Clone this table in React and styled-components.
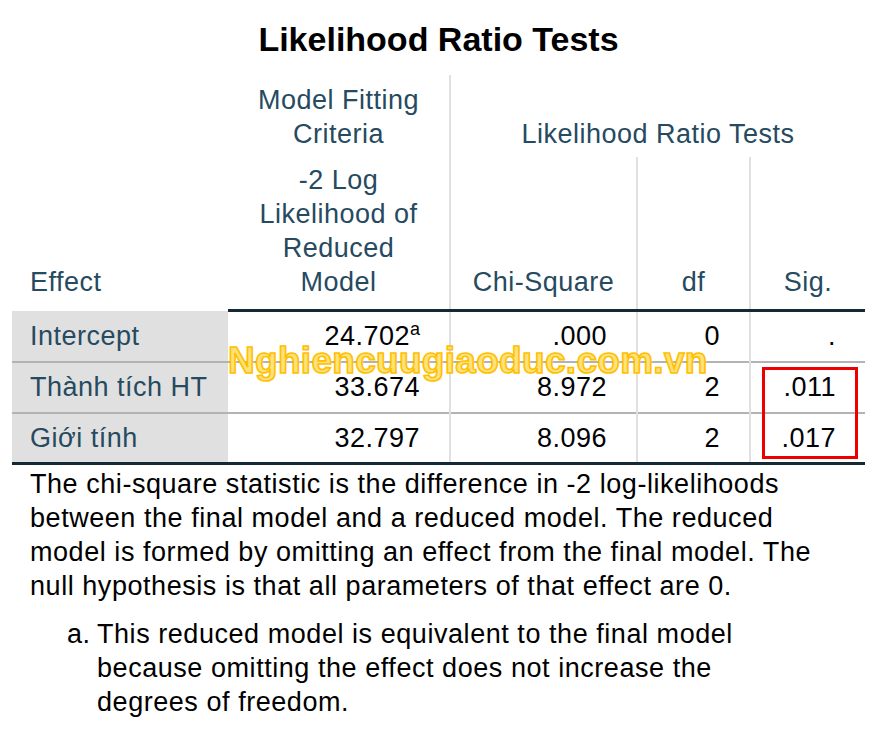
import React from "react";
import styled, { createGlobalStyle } from "styled-components";

const GlobalStyle = createGlobalStyle`
  html, body {
    margin: 0;
    padding: 0;
    background: #ffffff;
  }
  body {
    font-family: "Liberation Sans", Arial, sans-serif;
  }
`;

const header = "#264a60";
const ink = "#010205";

const columns = [216, 222, 187, 113, 115];

const rows = [
  { effect: "Intercept", ll: "24.702", note: "a", chi: ".000", df: "0", sig: "." },
  { effect: "Thành tích HT", ll: "33.674", chi: "8.972", df: "2", sig: ".011" },
  { effect: "Giới tính", ll: "32.797", chi: "8.096", df: "2", sig: ".017" },
];

function App() {
  return (
    <Page>
      <GlobalStyle />
      <Title>Likelihood Ratio Tests</Title>
      <TableWrap>
        <Table>
          <colgroup>
            {columns.map((w, i) => (
              <col key={i} style={{ width: w }} />
            ))}
          </colgroup>
          <thead>
            <tr>
              <HeadCell rowSpan={2} align="left" $pad="0 0 12px 18px">
                Effect
              </HeadCell>
              <HeadCell $line $pad="8px 6px 6px" $height={82}>
                Model Fitting
                <br />
                Criteria
              </HeadCell>
              <HeadCell colSpan={3} $pad="0 6px 6px">
                Likelihood Ratio Tests
              </HeadCell>
            </tr>
            <tr>
              <HeadCell $line $pad="6px 6px 10px">
                -2 Log
                <br />
                Likelihood of
                <br />
                Reduced
                <br />
                Model
              </HeadCell>
              <HeadCell $line $pad="0 4px 10px">Chi-Square</HeadCell>
              <HeadCell $line $pad="0 4px 10px">df</HeadCell>
              <HeadCell $pad="0 4px 10px">Sig.</HeadCell>
            </tr>
          </thead>
          <tbody>
            {rows.map((r, i) => (
              <DataRow key={r.effect} $last={i === rows.length - 1}>
                <Label>{r.effect}</Label>
                <Num $line>
                  {r.ll}
                  {r.note && <Sup>{r.note}</Sup>}
                </Num>
                <Num $line>{r.chi}</Num>
                <Num $line>{r.df}</Num>
                <Num>{r.sig}</Num>
              </DataRow>
            ))}
          </tbody>
        </Table>
        <Watermark>Nghiencuugiaoduc.com.vn</Watermark>
        <Highlight />
      </TableWrap>
      <Note>
        The chi-square statistic is the difference in -2 log-likelihoods
        between the final model and a reduced model. The reduced model is
        formed by omitting an effect from the final model. The null hypothesis
        is that all parameters of that effect are 0.
      </Note>
      <Footnote>
        <Mark>a.</Mark>
        <span>
          This reduced model is equivalent to the final model because omitting
          the effect does not increase the degrees of freedom.
        </span>
      </Footnote>
    </Page>
  );
}

export default App;

const Page = styled.div`
  width: 882px;
  height: 742px;
  padding: 21px 0 0 12px;
  box-sizing: border-box;
`;

const Title = styled.h1`
  width: 853px;
  margin: 0;
  font-size: 34px;
  line-height: 36px;
  font-weight: bold;
  text-align: center;
  color: #000;
`;

const TableWrap = styled.div`
  position: relative;
  width: 853px;
  margin-top: 18px;
`;

const Table = styled.table`
  width: 853px;
  border-collapse: collapse;
  table-layout: fixed;
  font-size: 27px;
  line-height: 34px;
  letter-spacing: 0.5px;

  thead tr:last-child th {
    border-bottom: 3px solid #152935;
  }
`;

const HeadCell = styled.th`
  font-weight: normal;
  color: ${header};
  text-align: ${(p) => p.align || "center"};
  vertical-align: bottom;
  padding: ${(p) => p.$pad || "0"};
  height: ${(p) => (p.$height ? `${p.$height}px` : "auto")};
  box-sizing: border-box;
  border-right: ${(p) => (p.$line ? "2px solid #e0e0e0" : "none")};
  white-space: nowrap;
`;

const DataRow = styled.tr`
  height: 51px;
  border-bottom: ${(p) => (p.$last ? "3px solid #152935" : "2px solid #b3b3b3")};
`;

const Label = styled.td`
  background: #e0e0e0;
  color: ${header};
  padding: 0 0 0 18px;
  white-space: nowrap;
`;

const Num = styled.td`
  color: ${ink};
  text-align: right;
  padding: 0 29px 0 0;
  border-right: ${(p) => (p.$line ? "2px solid #e0e0e0" : "none")};
  white-space: nowrap;
`;

const Sup = styled.sup`
  font-size: 18px;
  line-height: 0;
  letter-spacing: 0;
  vertical-align: 10px;
`;

const Watermark = styled.div`
  position: absolute;
  left: 216px;
  top: 266px;
  font-size: 37px;
  line-height: 40px;
  font-weight: bold;
  color: #ffe27a;
  -webkit-text-stroke: 1.6px #ffbf00;
  letter-spacing: 0.3px;
  pointer-events: none;
  white-space: nowrap;
`;

const Highlight = styled.div`
  position: absolute;
  left: 750px;
  top: 292px;
  width: 96px;
  height: 92px;
  box-sizing: border-box;
  border: 3px solid #ee0000;
`;

const Note = styled.p`
  margin: 0;
  padding: 2px 47px 0 18px;
  font-size: 27px;
  line-height: 34px;
  letter-spacing: 0.55px;
  color: #000;
`;

const Footnote = styled.div`
  display: flex;
  margin-top: 14px;
  padding: 0 120px 0 55px;
  font-size: 27px;
  line-height: 34px;
  letter-spacing: 0.55px;
  color: #000;
`;

const Mark = styled.span`
  flex: 0 0 30px;
`;
